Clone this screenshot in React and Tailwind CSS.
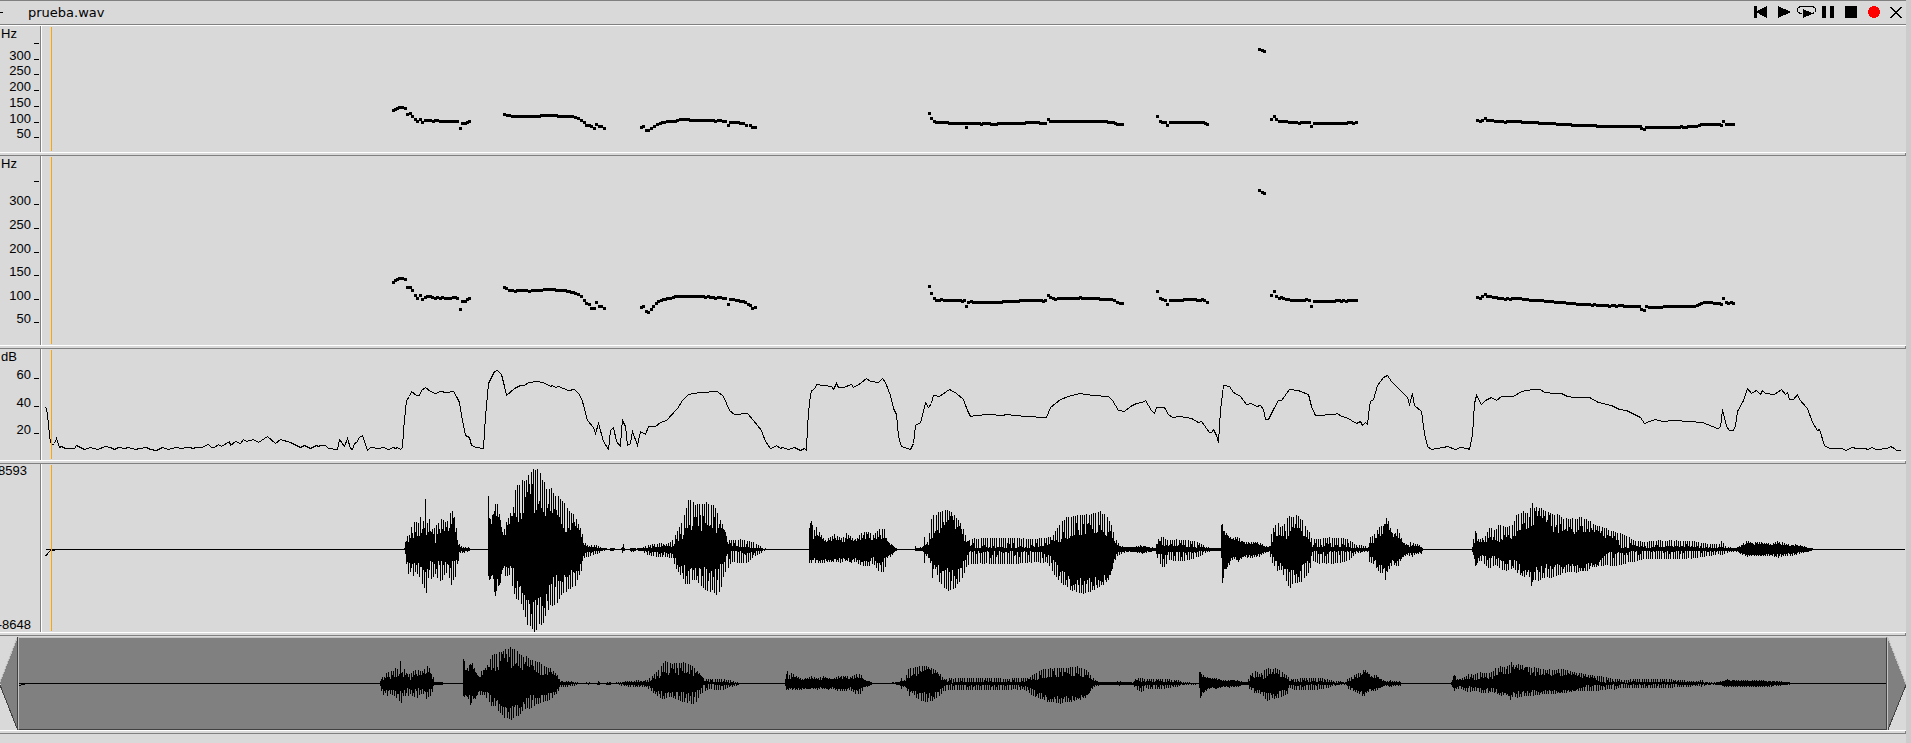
import React from "react";

/* Traces are stored in thirds of a pixel, one block per stretch of the recording. */

const PITCH_A = [
  { x0: 380, y0: 90, runs: [
    [[40,61],[52,55],[67,52],[76,55]], [[82,73],[91,70],[97,79],[106,88],[112,94]], [[121,88]],
    [[127,97],[136,91],[150,91],[160,94],[172,91],[180,94],[232,94]], [[241,115]], [[247,100],[256,100],[268,94]],
    [[373,73],[382,76],[397,79],[478,79],[484,76],[530,76],[536,79],[570,79],[587,82],[604,91],[613,97],[619,106],[628,106],[643,115]],
    [[649,103],[658,109],[664,109],[673,115]], [[784,112],[790,109]],
    [[799,121],[806,121],[814,115],[823,109],[840,100],[862,95],[885,93],[902,88],[925,88],[932,91],[1000,91],[1007,94],[1015,91],[1036,94]],
    [[1045,106]], [[1051,97],[1068,97],[1090,100],[1100,106],[1111,106],[1118,112],[1126,112]],
  ] },
  { x0: 900, y0: 30, runs: [
    [[88,250]], [[94,265],[103,274]], [[108,277],[142,277],[148,280],[196,280]], [[199,292]],
    [[205,280],[238,280],[244,283],[250,280],[268,280],[274,283],[290,283],[295,280],[372,280],[378,277],[416,277],[421,280],[436,280]],
    [[445,268],[452,274],[618,274],[624,277],[640,277],[652,283],[667,283]],
    [[772,259]], [[781,274],[787,277],[796,277]], [[802,286]], [[811,277],[910,277],[922,283]],
    [[1078,58],[1086,61],[1093,64]], [[1114,268]],
    [[1123,259],[1129,268],[1138,274],[1160,274],[1167,277],[1190,277],[1198,280],[1204,277],[1228,277]], [[1234,289]],
    [[1243,280],[1340,280],[1346,277],[1354,277],[1360,280],[1369,277]],
  ] },
  { x0: 1440, y0: 90, runs: [
    [[112,91],[121,94],[127,91],[136,85]],
    [[142,91],[158,91],[166,94],[188,94],[196,97],[203,94],[242,94],[248,97],[292,97],[298,100],[344,100],[352,103],[390,103],[397,106],[465,106],[472,109],[600,109]],
    [[604,115],[613,118]],
    [[619,112],[718,112],[725,109],[731,112],[740,112],[746,109],[770,109],[784,103],[838,103],[844,106]],
    [[850,94]], [[859,103],[880,103]],
  ] },
];

const PITCH_B = [
  { x0: 380, y0: 90, runs: [
    [[40,577],[52,568],[67,565],[76,568]], [[82,592],[91,592],[97,601],[106,616],[112,625]], [[121,616]],
    [[127,628],[136,622],[151,619],[166,625],[172,622],[180,625],[188,622],[196,625],[210,625],[220,622],[232,625]],
    [[241,658]], [[247,634],[256,634],[268,625]],
    [[373,592],[388,601],[406,604],[420,601],[440,601],[448,604],[458,601],[485,601],[492,598],[522,598],[530,601],[555,601],[575,607],[587,609],[604,619]],
    [[613,631],[619,640],[628,643],[634,655],[643,655]], [[649,637]], [[658,649],[664,649],[673,655]], [[784,652],[790,649]],
    [[799,664],[806,667],[814,658],[820,649],[829,640],[843,631],[862,626],[880,622],[895,619],[970,619],[977,622],[985,619],[1007,625],[1015,622],[1036,625]],
    [[1045,643]], [[1051,628],[1068,631],[1090,634],[1111,646],[1118,655],[1126,652]],
  ] },
  { x0: 900, y0: 30, runs: [
    [[88,769]], [[94,790]], [[103,805],[109,811],[118,811],[124,808],[132,811],[180,811],[186,814],[193,811]], [[199,829]],
    [[205,817],[214,814],[220,817],[304,817],[310,814],[356,814],[362,811],[424,811],[430,814],[436,811]],
    [[445,796],[452,802],[466,808],[474,805],[536,805],[541,802],[547,805],[596,805],[602,808],[634,808],[652,817],[660,820],[667,820]],
    [[772,784]], [[781,805],[796,811]], [[802,823]],
    [[811,811],[848,811],[854,808],[885,808],[892,811],[900,811],[907,808],[922,817]],
    [[1078,481],[1086,487],[1093,490]], [[1114,796]], [[1123,784]],
    [[1129,799],[1138,805],[1145,802],[1158,808],[1173,811],[1212,811],[1219,808],[1228,811]], [[1234,829]],
    [[1243,814],[1302,814],[1308,811],[1318,811],[1325,814],[1331,811],[1339,814],[1346,811],[1369,811]],
  ] },
  { x0: 1440, y0: 90, runs: [
    [[112,622],[121,625],[127,619],[136,613]],
    [[142,619],[152,619],[160,622],[176,625],[188,625],[196,628],[203,625],[211,628],[218,625],[242,625],[250,628],[262,628],[270,631],[308,631],[316,634],[338,634],[346,637],[374,637],[382,640],[404,640],[412,643],[442,643],[456,646],[463,643],[472,646],[502,646],[508,649],[516,646],[524,646],[530,649],[538,646],[546,646],[552,649],[598,649]],
    [[604,658],[613,661]],
    [[619,649],[628,652],[665,652],[672,649],[764,649],[778,643],[792,637],[814,637],[822,640],[838,640],[844,643]],
    [[850,625]], [[859,637],[866,640],[874,637],[880,640]],
  ] },
];

const POWER = [
  { x0: 0, pts: [[136,202],[139,204],[144,250],[148,290],[154,315],[163,310],[169,296],[178,322],[184,318],[195,324],[215,324],[222,326],[229,317],[252,328],[272,322],[292,328],[315,319],[330,323],[344,328],[356,322],[372,326],[385,323],[405,329],[418,326],[438,322],[452,328],[468,331],[488,322],[505,327],[525,322],[545,324],[560,321]] },
  { x0: 190, pts: [[0,322],[8,326],[20,321],[35,321],[55,313],[64,322],[72,321],[84,312],[94,320],[117,305],[122,315],[135,304],[150,311],[161,298],[168,305],[190,298],[206,308],[232,288],[257,311],[270,297],[300,307],[330,322],[342,315],[360,324],[378,316],[385,319],[392,315],[405,316],[415,325],[443,328],[448,298],[464,320],[473,295],[480,325],[488,328],[494,310],[500,308],[508,292],[518,287],[532,330],[542,321],[565,324],[580,322],[595,328],[610,322],[616,325],[622,322]] },
  { x0: 380, pts: [[60,328],[67,322],[70,270],[75,210],[79,180],[87,170],[94,155],[108,166],[117,166],[125,152],[137,143],[150,153],[165,161],[180,155],[200,157],[219,154],[228,170],[238,188],[247,240],[256,285],[268,293],[273,315],[288,323],[310,324],[317,230],[325,130],[334,112],[342,95],[351,91],[365,102],[372,140],[380,166],[402,145],[420,137],[432,136],[446,128],[475,125],[497,130],[512,139],[518,136],[525,142],[535,139],[565,151],[582,149],[597,163],[608,185],[623,242],[640,262],[647,280],[655,250],[670,305],[684,327],[692,270],[700,263],[708,305],[720,318],[724,270],[728,241],[736,260],[743,317],[752,310],[757,275],[772,317],[782,275],[795,284],[804,259],[826,258],[840,247],[858,241],[892,206],[908,180],[925,164],[960,157],[1012,154],[1030,170],[1048,210],[1062,223],[1102,220],[1120,242],[1145,270],[1155,305],[1170,326],[1180,322],[1190,317],[1200,325]] },
  { x0: 780, pts: [[8,322],[25,327],[42,322],[60,330],[74,326],[79,330],[83,260],[88,185],[94,152],[102,148],[110,134],[155,139],[161,147],[169,131],[176,143],[190,142],[213,134],[221,142],[240,131],[258,116],[270,124],[296,127],[306,115],[317,127],[330,165],[340,205],[349,222],[355,290],[365,318],[390,328],[400,310],[407,257],[420,248],[430,215],[436,186],[446,203],[453,190],[460,167],[478,168],[508,148],[530,159],[550,178],[562,210],[571,230],[590,226],[625,223],[668,226],[680,224],[735,229],[798,232],[812,203],[840,177],[865,169],[898,161],[940,166],[985,170],[998,180],[1016,210],[1034,213],[1050,199],[1070,190],[1086,187],[1096,182],[1115,212],[1123,219],[1130,203],[1152,203],[1165,222],[1176,232]] },
  { x0: 1180, pts: [[0,229],[35,235],[55,247],[65,245],[88,276],[95,277],[101,269],[110,287],[116,306],[119,260],[122,210],[130,137],[147,138],[160,158],[182,170],[200,192],[215,191],[228,199],[240,195],[250,208],[257,238],[265,238],[280,207],[295,180],[305,180],[328,147],[355,150],[362,155],[385,163],[395,198],[407,226],[462,223],[472,221],[483,229],[500,232],[528,249],[540,245],[548,255],[555,246],[563,252],[567,200],[572,185],[580,178],[592,135],[610,112],[622,107],[635,123],[660,150],[682,173],[689,192],[697,161],[704,197],[725,214],[732,280],[743,320],[755,328],[790,323],[802,319],[825,327],[840,323],[862,324],[869,328],[877,282],[883,190],[889,167],[905,192],[915,180],[935,173],[950,181],[965,170],[1000,170],[1025,154],[1060,148],[1080,149]] },
  { x0: 1511, pts: [[100,156],[130,160],[150,161],[170,168],[190,171],[235,173],[262,186],[300,195],[325,208],[345,211],[388,233],[399,250],[415,244],[433,239],[455,243],[490,241],[575,248],[620,266],[628,262],[634,208],[645,260],[655,270],[666,270],[673,255],[680,215],[697,180],[710,146],[722,160],[737,151],[749,163],[755,152],[762,160],[790,163],[810,148],[822,163],[830,158],[836,178],[846,178],[860,164],[865,178],[888,205],[905,248],[918,270],[926,268],[940,315],[955,325],[990,324],[1005,330],[1020,322],[1040,324],[1060,326],[1072,328],[1082,323],[1095,328],[1128,325],[1137,318],[1150,325],[1157,330],[1169,330]] },
];

/* Envelope keys: [x, upper peak, upper body, lower body, lower peak]. */
const ENVELOPE = [
  { x0: 380, keys: [
    [0,1,1,0,0],[73,1,1,0,0],[75,10,8,6,8],[78,40,25,15,35],[84,40,20,25,75],[90,45,30,45,60],[96,75,40,40,85],[105,80,30,40,65],[115,78,40,40,75],[124,110,45,50,95],[130,85,45,65,110],[134,100,50,50,120],[136,160,50,50,125],[139,90,40,50,135],[142,70,40,50,90],[148,95,40,35,80],[156,60,55,30,90],[165,65,15,30,70],[175,80,50,30,90],[185,95,50,35,95],[195,80,45,30,70],[205,85,55,30,70],[213,115,60,30,105],[220,115,60,30,90],[226,70,45,35,80],[232,50,20,20,50],[237,15,5,5,10],[245,5,3,4,10],[265,5,3,3,5],[270,1,1,0,0],[323,1,1,0,0],
    [324,165,90,85,90],[326,165,90,85,90],[328,95,80,85,88],[334,95,80,80,80],[340,120,80,80,110],[345,140,100,80,145],[351,140,110,80,110],[358,100,90,90,110],[364,60,55,60,80],[370,40,40,45,50],[376,80,40,40,80],[388,100,80,50,75],[400,130,110,60,120],[408,190,60,100,150],[420,205,70,110,150],[430,205,70,110,190],[440,215,190,135,220],[452,240,190,150,235],[460,245,120,150,245],[466,248,115,160,245],[476,235,110,150,235],[488,210,100,165,220],[500,185,80,135,185],[512,190,110,100,170],[522,165,115,80,170],[532,165,115,80,165],[542,150,70,80,140],[555,140,50,80,130],[565,115,60,70,120],[575,110,60,70,115],[585,100,60,60,110],[595,75,50,50,80],[605,50,35,30,60],[612,20,10,10,25],[625,10,8,5,20],[640,12,5,3,15],[655,10,3,2,12],[670,2,2,1,2],[688,1,1,0,0],[691,4,3,2,4],[700,4,3,2,4],[703,1,1,0,0],[724,1,1,0,0],[727,14,5,4,10],[731,14,5,2,5],[733,1,1,0,0],[750,1,1,0,0],[752,4,3,4,7],[765,4,3,2,4],[768,1,1,0,0],[778,4,2,2,3],[788,4,2,2,3],[795,8,3,2,12],[820,15,5,5,20],[845,18,8,8,22],[860,15,8,8,22],[875,25,5,10,25],[890,50,20,20,60],[905,80,30,50,80],[916,115,40,50,100],[925,148,70,55,105],[940,140,50,60,85],[955,135,70,60,100],[965,140,60,60,110],[982,142,70,55,130],[1000,135,70,60,125],[1010,110,50,60,140],[1022,85,75,40,115],[1032,60,55,30,70],[1042,28,15,5,60],[1055,28,10,2,35],[1080,30,5,3,40],[1100,25,5,5,40],[1120,20,3,5,22],[1140,8,2,2,12],[1150,2,1,1,2],[1160,1,1,0,0],
  ] },
  { x0: 780, keys: [
    [0,1,1,0,0],[86,1,1,0,0],[88,70,45,30,40],[94,88,30,28,40],[100,40,35,25,30],[106,72,35,25,40],[115,55,35,30,40],[125,40,30,25,38],[135,28,22,28,38],[165,45,25,25,35],[185,30,20,25,38],[198,48,25,22,32],[215,35,25,28,40],[230,30,25,25,35],[244,50,30,30,50],[264,52,30,30,50],[280,42,28,22,40],[298,62,25,35,70],[312,62,30,25,68],[320,25,22,20,25],[330,18,14,14,20],[345,4,3,3,4],[350,1,1,0,0],[403,1,1,0,0],[406,8,3,3,6],[412,3,2,2,3],[430,8,5,5,5],[433,40,10,8,40],[438,15,12,10,15],[446,30,15,15,25],[451,70,25,35,40],[457,108,30,35,88],[464,100,50,45,50],[475,110,50,45,90],[488,120,60,55,115],[505,120,95,60,125],[515,110,90,55,125],[525,100,60,70,115],[540,80,60,55,95],[552,55,25,30,70],[560,25,20,5,45],[575,32,3,3,45],[600,32,4,4,42],[650,35,4,4,43],[700,34,4,4,43],[750,30,4,4,38],[800,35,8,8,38],[815,35,22,20,60],[830,60,22,40,85],[850,90,22,60,105],[870,100,35,80,118],[900,105,40,85,135],[930,105,42,90,125],[960,112,42,80,110],[980,100,40,75,100],[992,78,40,60,70],[1000,50,25,30,45],[1008,28,10,10,20],[1020,10,5,5,15],[1035,5,4,4,6],[1060,6,5,5,6],[1085,12,6,6,12],[1105,6,4,4,6],[1127,3,3,3,3],[1130,20,12,12,20],[1140,38,15,8,40],[1150,35,10,5,55],[1165,25,10,5,30],[1190,30,8,5,35],
  ] },
  { x0: 1180, keys: [
    [0,28,8,5,35],[30,26,5,5,30],[60,18,4,4,18],[80,5,2,2,5],[122,2,2,2,3],[124,76,60,20,20],[127,76,45,60,105],[132,55,40,55,60],[145,40,35,35,50],[160,35,25,20,25],[175,38,25,25,35],[190,20,15,18,22],[215,22,15,15,25],[237,20,12,12,20],[255,8,6,5,8],[268,8,4,4,6],[273,40,10,10,30],[282,70,30,20,50],[292,80,35,35,65],[303,65,40,35,60],[315,80,30,50,85],[328,102,40,55,118],[340,95,55,55,100],[353,102,55,60,100],[367,85,40,50,95],[380,60,30,30,75],[388,50,20,15,65],[395,28,8,5,30],[410,30,5,3,42],[450,35,5,3,42],[490,33,5,3,38],[510,25,4,4,28],[525,12,3,3,12],[540,12,3,2,8],[565,5,3,3,5],[568,35,10,5,35],[580,40,20,25,40],[590,55,25,35,55],[600,70,40,50,70],[608,65,50,50,70],[615,90,75,55,90],[622,92,70,50,65],[630,65,50,35,50],[640,40,38,30,45],[652,60,40,30,50],[660,40,25,25,35],[670,20,15,15,20],[685,12,8,8,12],[692,22,8,10,25],[705,15,8,8,12],[724,12,6,6,12],[727,1,1,0,0],[876,1,1,0,0],[880,30,15,15,20],[886,58,25,20,50],[893,30,20,20,35],[905,30,20,18,35],[920,45,20,20,50],[930,68,30,15,55],[945,55,20,20,45],[958,78,25,25,55],[975,65,30,30,65],[1000,75,30,30,55],[1010,105,45,35,65],[1025,115,55,50,80],[1040,110,60,60,80],[1051,120,60,60,85],[1053,155,70,70,110],[1055,155,70,70,110],[1058,125,75,60,90],[1075,130,85,50,95],[1095,115,90,50,80],[1110,112,60,45,85],[1130,105,50,45,80],[1150,95,50,40,70],[1190,92,50,40,68],
  ] },
  { x0: 1511, keys: [
    [205,98,35,50,65],[228,88,50,45,62],[250,75,50,40,50],[270,68,45,30,50],[290,60,35,5,45],[310,52,30,4,50],[330,48,2,10,45],[350,38,2,5,38],[370,25,10,2,38],[385,25,6,3,30],[400,20,2,2,28],[420,25,3,3,28],[480,26,8,2,28],[540,25,6,2,26],[570,20,4,4,22],[600,14,4,3,18],[625,14,4,3,10],[631,25,5,4,18],[640,10,3,2,12],[660,4,2,2,5],[680,5,4,4,6],[695,15,10,10,15],[707,25,14,14,22],[720,20,14,14,18],[750,20,14,14,20],[780,16,12,12,18],[800,24,13,13,24],[820,18,11,11,18],[840,12,8,8,18],[855,14,9,9,14],[880,8,5,5,8],[900,2,2,2,2],[906,1,1,0,0],[1182,1,1,0,0],
  ] },
];

const PLOT_LEFT = 42;
const PLOT_WIDTH = 1864;

const KEYS = ENVELOPE.flatMap((b) => b.keys.map(([x, ...v]) => [b.x0 + x / 3, ...v.map((n) => n / 3)]));

function envelopeAt(x) {
  if (x <= KEYS[0][0]) return KEYS[0].slice(1);
  let i = 1;
  while (i < KEYS.length - 1 && KEYS[i][0] < x) i += 1;
  const a = KEYS[i - 1];
  const b = KEYS[i];
  const t = Math.max(0, Math.min(1, (x - a[0]) / (b[0] - a[0] || 1)));
  return a.slice(1).map((v, k) => v + (b[k + 1] - v) * t);
}

function noise(n) {
  const s = Math.sin(n * 127.1) * 43758.5453;
  return s - Math.floor(s);
}

/* A lone burst stands well above the signal two pixels to either side of it. */
function isBurst(x, k) {
  const here = envelopeAt(x)[k];
  return here > 12 && here > envelopeAt(x - 2)[k] * 1.25 && here > envelopeAt(x + 2)[k] * 1.25;
}

/* Between peaks the signal fills its body and part of the way up to the peak. */
function fill(body, peak, n) {
  const r = noise(n);
  return Math.min(peak, body * (0.85 + 0.3 * noise(n + 31)) + Math.max(0, peak - body) * 0.55 * r * r * r);
}

function wavePath({ from, to, mid, gain, toSource, period }) {
  let d = "";
  for (let x = from; x < to; x += 1) {
    const source = toSource(x);
    const left = envelopeAt(source);
    const right = envelopeAt(source + 0.4);
    const [peakUp, bodyUp, bodyDown, peakDown] = left.map((v, k) => Math.max(v, right[k]));
    const up = Math.floor(x / period) !== Math.floor((x - 1) / period) || isBurst(source + 0.3, 0);
    const down = Math.floor((x + 1) / period) !== Math.floor(x / period) || isBurst(source + 0.3, 3);
    const high = up ? peakUp * (0.94 + 0.06 * noise(x + 9)) : fill(bodyUp, peakUp, x);
    const low = down ? peakDown * (0.94 + 0.06 * noise(x + 5)) : fill(bodyDown, peakDown, x + 17);
    const top = mid - Math.round(high * gain);
    const bottom = mid + Math.max(1, Math.round(low * gain) + (low > 0.5 ? 1 : 0));
    d += `M${x} ${Math.min(top, mid)}h1V${bottom}h-1z`;
  }
  return d;
}

const WAVE = wavePath({ from: 4, to: 1863, mid: 85, gain: 1.01, toSource: (x) => x + PLOT_LEFT, period: 2.25 });
const OVERVIEW = wavePath({
  from: 0, to: 1868, mid: 45, gain: 0.445, period: 2.25,
  toSource: (x) => (x + 19 - 400.3) / 1.0036 + 425.3,
});

function dotsPath(blocks, paneTop) {
  let d = "";
  const dot = (x, y) => { d += `M${x - 1} ${y - 1}h3v3h-3z`; };
  blocks.forEach(({ x0, y0, runs }) => {
    const put = (x, y) => dot(Math.floor(x / 3) + x0 - PLOT_LEFT, Math.floor(y / 3) + y0 - paneTop);
    runs.forEach((run) => {
      put(run[0][0], run[0][1]);
      for (let i = 1; i < run.length; i += 1) {
        const [ax, ay] = run[i - 1];
        const [bx, by] = run[i];
        const steps = Math.max(1, Math.round((bx - ax) / 7.5));
        for (let s = 1; s <= steps; s += 1) put(ax + ((bx - ax) * s) / steps, ay + ((by - ay) * s) / steps);
      }
    });
  });
  return d;
}

const PITCH_A_PATH = dotsPath(PITCH_A, 26);
const PITCH_B_PATH = dotsPath(PITCH_B, 156);
const POWER_POINTS = POWER.flatMap(({ x0, pts }) =>
  pts.map(([x, y]) => `${Math.floor(x / 3) + x0 - PLOT_LEFT + 0.5},${Math.floor(y / 3) - 9 + 0.5}`)
).join(" ");

function Sash() {
  return (
    <div className="h-1 shrink-0 border-t border-b border-t-white border-b-[#808080]">
      <div className="h-full border-r border-[#808080]" />
    </div>
  );
}

function Pane({ name, height, unit, ticks = [], labels = [], children }) {
  return (
    <section aria-label={name} className="flex shrink-0">
      <svg width="40" height={height} className="block shrink-0 font-['Liberation_Sans',sans-serif] text-[13px]">
        {unit && <text x="1" y="12">{unit}</text>}
        {ticks.map(([y, text]) => (
          <g key={y}>
            <rect x="34" y={y} width="5" height="1" />
            {text && <text x="31" y={y + 1} textAnchor="end">{text}</text>}
          </g>
        ))}
        {labels.map(([x, y, text]) => (
          <text key={text} x={x} y={y} textAnchor="end">{text}</text>
        ))}
      </svg>
      <div className="min-w-0 grow border-l border-[#808080]">
        <div className="border-l border-white">
          <svg
            width="100%"
            height={height}
            viewBox={`0 0 ${PLOT_WIDTH} ${height}`}
            preserveAspectRatio="none"
            shapeRendering="crispEdges"
            className="block"
          >
            {children}
            <rect x="9" y="1" width="1" height={height - 2} fill="#ffa500" />
          </svg>
        </div>
      </div>
    </section>
  );
}

function IconButton({ label, width = 12, className = "", children }) {
  return (
    <button type="button" aria-label={label} className={`block shrink-0 ${className}`}>
      <svg width={width} height="13" viewBox={`0 0 ${width} 13`} shapeRendering="crispEdges" className="block">
        {children}
      </svg>
    </button>
  );
}

export default function App() {
  return (
    <div className="min-h-screen border-r-[5px] border-[#cccccc] bg-[#d9d9d9] text-black">
      <main className="flex flex-col">
        <header className="flex h-[25px] shrink-0 items-center border-y border-[#808080] pr-1">
          <button type="button" aria-label="Collapse" className="w-7 shrink-0">
            <span className="block h-px w-[3px] bg-black" />
          </button>
          <h1 className="grow font-['DejaVu_Sans',sans-serif] text-[13px] leading-4">prueba.wav</h1>
          <div className="flex items-center gap-[11px]">
            <IconButton label="Rewind" width={13}>
              <path d="M0 0h3v12h-3zM13 0v12L3 6.7v-1.4z" />
            </IconButton>
            <IconButton label="Play">
              <path d="M0 0L12 5.5v1L0 12z" />
            </IconButton>
            <IconButton label="Play in loop" width={19} className="-ml-1 -mr-[5px]">
              <path d="M5 7.5H3.5L1.5 6.5L.5 5V3L1.5 1.5L3.5 .5H15.5L17.5 1.5L18.5 3V5L17.5 6.5L15.5 7.5H14" fill="none" stroke="black" />
              <path d="M6 3L15 7v1L6 12z" />
            </IconButton>
            <IconButton label="Pause">
              <path d="M0 0h4v12h-4zM8 0h4v12h-4z" />
            </IconButton>
            <IconButton label="Stop">
              <path d="M0 0h12v12H0z" />
            </IconButton>
            <IconButton label="Record">
              <circle cx="6" cy="6" r="6" fill="#ff0000" />
            </IconButton>
            <IconButton label="Close" className="-ml-px">
              <path d="M.5 1L11.5 12M11.5 1L.5 12" fill="none" stroke="black" strokeWidth="1.8" />
            </IconButton>
          </div>
        </header>
        <div className="h-px bg-white" />

        <Pane name="Pitch" height={126} unit="Hz" ticks={[[17], [33, "300"], [48, "250"], [64, "200"], [80, "150"], [96, "100"], [111, "50"]]}>
          <path d={PITCH_A_PATH} />
        </Pane>
        <Sash />
        <Pane name="Pitch, smoothed" height={189} unit="Hz" ticks={[[25], [48, "300"], [72, "250"], [96, "200"], [119, "150"], [143, "100"], [166, "50"]]}>
          <path d={PITCH_B_PATH} />
        </Pane>
        <Sash />
        <Pane name="Power" height={111} unit="dB" ticks={[[29, "60"], [57, "40"], [84, "20"]]}>
          <polyline points={POWER_POINTS} fill="none" stroke="black" />
        </Pane>
        <Sash />
        <Pane name="Waveform" height={168} labels={[[27, 11, "8593"], [31, 165, "-8648"]]}>
          <path d={WAVE} />
          <path d="M3.5 92.5L5.5 89.5L8.5 86.5L13 86" fill="none" stroke="black" strokeWidth="1.4" />
        </Pane>
        <Sash />

        <section aria-label="Overview" className="flex shrink-0 pt-px">
          <button type="button" aria-label="Scroll left" className="shrink-0">
            <svg width="18" height="93" shapeRendering="crispEdges" className="block">
              <path d="M0 46L17 1V92z" fill="#808080" />
              <path d="M0 45L17 1" fill="none" stroke="#c3c3c3" />
              <path d="M0 48L17.5 92.5" fill="none" stroke="#404040" />
              <rect x="17" width="1" height="93" fill="#404040" />
            </svg>
          </button>
          <div className="min-w-0 grow border border-t-[#c3c3c3] border-r-[#404040] border-b-[#404040] border-l-[#c3c3c3] bg-[#808080]">
            <svg
              width="100%"
              height="91"
              viewBox="0 0 1867 91"
              preserveAspectRatio="none"
              shapeRendering="crispEdges"
              className="block"
            >
              <path d={OVERVIEW} />
              <path d="M0 47.5L8 45.5" fill="none" stroke="black" />
            </svg>
          </div>
          <button type="button" aria-label="Scroll right" className="shrink-0">
            <svg width="19" height="93" shapeRendering="crispEdges" className="block">
              <path d="M1 1L19 47L1 93z" fill="#808080" />
              <path d="M1 1L19 47" fill="none" stroke="#c3c3c3" />
              <path d="M1 92.5L19 48" fill="none" stroke="#404040" />
              <rect width="1" height="93" fill="#c3c3c3" />
            </svg>
          </button>
        </section>
        <Sash />
      </main>
    </div>
  );
}
